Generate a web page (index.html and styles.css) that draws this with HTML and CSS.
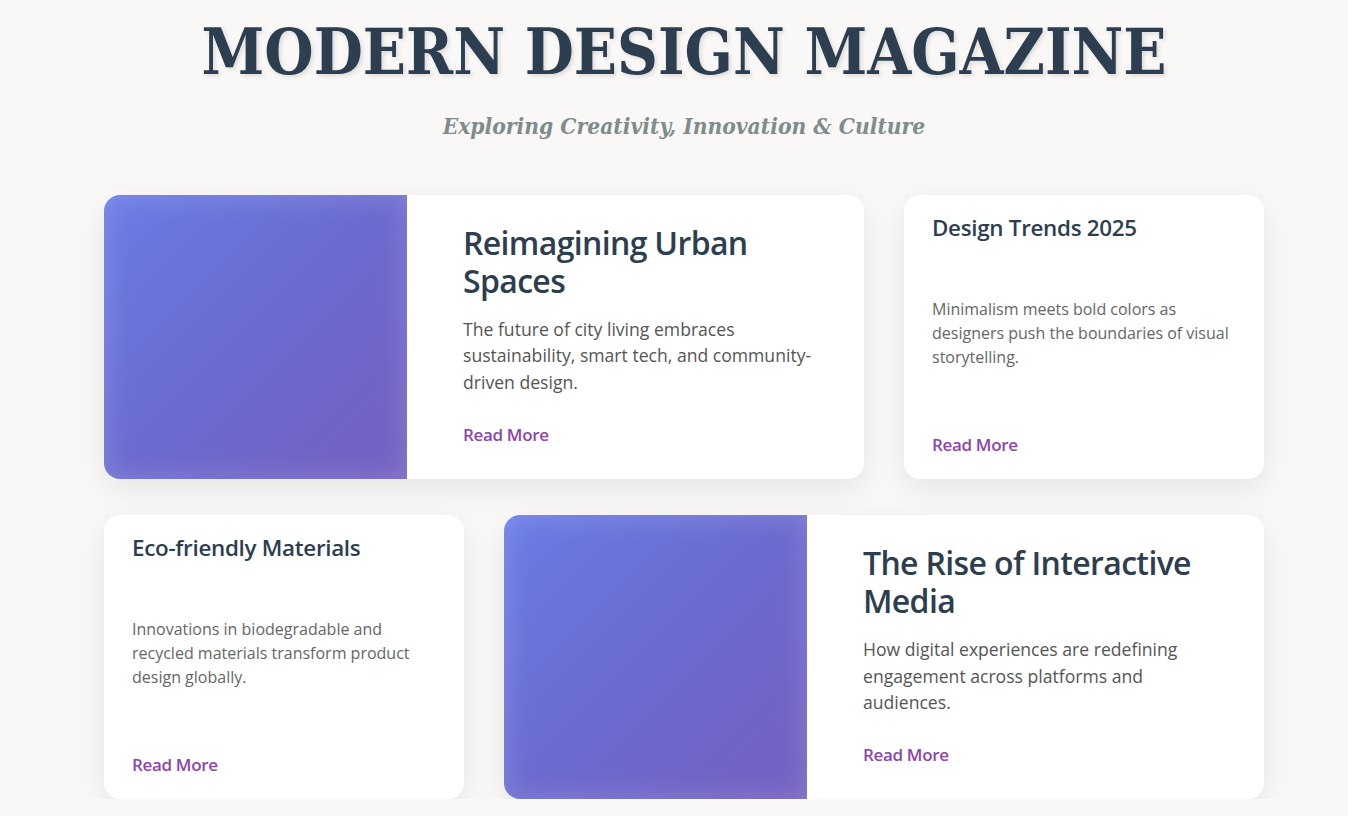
FILE: index.html
```html
<!DOCTYPE html>
<html lang="en">
<head>
<meta charset="utf-8">
<title>Modern Design Magazine</title>
<link rel="stylesheet" href="styles.css">
</head>
<body>
<header class="masthead">
  <h1 class="masthead-title">MODERN DESIGN MAGAZINE</h1>
  <p class="masthead-tagline">Exploring Creativity, Innovation &amp; Culture</p>
</header>
<main class="grid">
  <article class="card card-featured">
    <div class="card-image"></div>
    <div class="card-body">
      <h2 class="featured-title">Reimagining Urban Spaces</h2>
      <p class="featured-text">The future of city living embraces sustainability, smart tech, and community-driven design.</p>
      <a class="read-more" href="#">Read More</a>
    </div>
  </article>
  <article class="card card-small">
    <h3 class="small-title">Design Trends 2025</h3>
    <p class="small-text">Minimalism meets bold colors as designers push the boundaries of visual storytelling.</p>
    <a class="read-more" href="#">Read More</a>
  </article>
  <article class="card card-small">
    <h3 class="small-title">Eco-friendly Materials</h3>
    <p class="small-text">Innovations in biodegradable and recycled materials transform product design globally.</p>
    <a class="read-more" href="#">Read More</a>
  </article>
  <article class="card card-featured">
    <div class="card-image"></div>
    <div class="card-body">
      <h2 class="featured-title">The Rise of Interactive Media</h2>
      <p class="featured-text">How digital experiences are redefining engagement across platforms and audiences.</p>
      <a class="read-more" href="#">Read More</a>
    </div>
  </article>
</main>
</body>
</html>
```

FILE: styles.css
```css
* {
  box-sizing: border-box;
}

body {
  margin: 0;
  padding: 0 0 0 20px;
  background: #f9f8f6;
  font-family: "Open Sans", "Liberation Sans", sans-serif;
  color: #2c3e50;
}

.masthead {
  text-align: center;
  padding: 14px 0 0;
}

.masthead-title {
  margin: 0;
  font-family: "DejaVu Serif Condensed", "DejaVu Serif", serif;
  font-stretch: condensed;
  font-weight: 700;
  font-size: 63px;
  line-height: 76px;
  letter-spacing: 0;
  color: #2c3e50;
  text-shadow: 2px 2px 4px rgba(0, 0, 0, 0.12);
}

.masthead-tagline {
  margin: 21px 0 0;
  font-family: "DejaVu Serif Condensed", "DejaVu Serif", serif;
  font-stretch: condensed;
  font-style: italic;
  font-weight: 700;
  font-size: 22.6px;
  line-height: 30px;
  color: #7f8c8d;
}

.grid {
  width: 1160px;
  margin: 54px auto 0;
  display: grid;
  grid-template-columns: repeat(3, 1fr);
  column-gap: 40px;
  row-gap: 36px;
}

.card {
  background: #fff;
  border-radius: 16px;
  box-shadow: 0 10px 30px rgba(0, 0, 0, 0.08);
  overflow: hidden;
}

.card-featured {
  grid-column: span 2;
  display: flex;
}

.card-image {
  flex: 0 0 303px;
  background: linear-gradient(135deg, #6a7ce6 0%, #6b6bcf 50%, #7460c0 100%);
  box-shadow: inset 0 0 30px rgba(255, 255, 255, 0.18);
}

.card-body {
  flex: 1;
  display: flex;
  flex-direction: column;
  justify-content: center;
  padding: 29px 40px 33px 56px;
}

.featured-title {
  margin: 0 0 16px;
  font-size: 32px;
  line-height: 38px;
  font-weight: 600;
  letter-spacing: -0.65px;
  color: #2c3e50;
}

.featured-text {
  margin: 0 0 28px;
  font-size: 17.6px;
  line-height: 26.4px;
  color: #555;
}

.read-more {
  align-self: flex-start;
  font-size: 17px;
  font-weight: 600;
  letter-spacing: -0.33px;
  color: #8e44ad;
  text-decoration: none;
}

.card-small {
  display: flex;
  flex-direction: column;
  justify-content: space-between;
  padding: 18px 28px 23px;
}

.small-title {
  margin: 0;
  font-size: 22.4px;
  line-height: 30px;
  font-weight: 600;
  letter-spacing: -0.3px;
  color: #2c3e50;
}

.small-text {
  margin: 0 0 10px;
  font-size: 16px;
  line-height: 24px;
  color: #666;
}
```
